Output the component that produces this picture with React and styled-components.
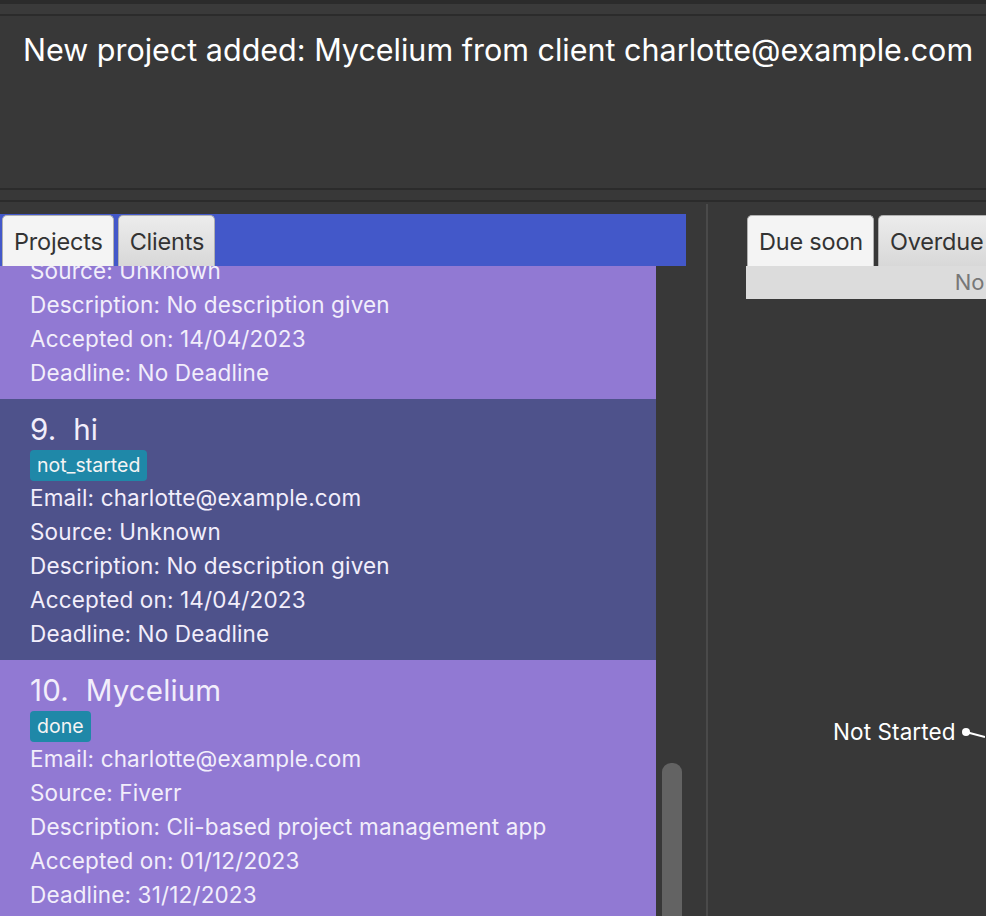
import React, { useLayoutEffect, useRef } from 'react';
import styled, { createGlobalStyle } from 'styled-components';

const GlobalStyle = createGlobalStyle`
  html, body {
    margin: 0;
    padding: 0;
    background: #383838;
    font-family: Inter, "Noto Sans", sans-serif;
  }
`;

const Window = styled.div`
  width: 986px;
  height: 916px;
  overflow: hidden;
  display: flex;
  flex-direction: column;
  background: #383838;
`;

const MenuStrip = styled.div`
  flex: none;
  height: 10px;
  border-top: 4px solid #2b2b2b;
  border-bottom: 2px solid #2b2b2b;
  background: #3a3a3a;
`;

const ResultBox = styled.div`
  flex: none;
  height: 174px;
  box-sizing: border-box;
  padding: 15px 23px;
  color: #ffffff;
  font-size: 30.5px;
  line-height: 38px;
  border-bottom: 2px solid #2b2b2b;
  white-space: nowrap;
`;

const Spacer = styled.div`
  flex: none;
  height: 10px;
  border-bottom: 2px solid #2b2b2b;
`;

const Main = styled.div`
  flex: 1;
  display: flex;
  min-height: 0;
`;

const LeftPanel = styled.div`
  flex: none;
  width: 686px;
  padding-top: 12px;
  display: flex;
  flex-direction: column;
  min-height: 0;
`;

const TabHeader = styled.div`
  flex: none;
  display: flex;
  gap: 4px;
  padding-left: ${({ $inset }) => $inset || 2}px;
  height: 52px;
  padding-top: 1px;
  box-sizing: border-box;
  background: ${({ $bg }) => $bg || 'transparent'};
`;

const Tab = styled.div`
  height: 51px;
  box-sizing: border-box;
  padding: 0 10px 0 11px;
  display: flex;
  align-items: center;
  font-size: 23.5px;
  letter-spacing: -0.2px;
  color: #333;
  border: 1px solid #b0b0b0;
  border-bottom: none;
  border-radius: 5px 5px 0 0;
  background: ${({ $active }) =>
    $active ? '#f4f4f4' : 'linear-gradient(#ececec, #d8d8d8)'};
`;

const ListArea = styled.div`
  flex: 1;
  display: flex;
  min-height: 0;
`;

const List = styled.div`
  width: 656px;
  overflow: hidden;
`;

const ScrollTrack = styled.div`
  width: 30px;
  position: relative;
`;

const ScrollThumb = styled.div`
  position: absolute;
  left: 6px;
  top: 497px;
  width: 20px;
  height: 200px;
  border-radius: 9px;
  background: #636363;
`;

const Card = styled.div`
  padding: 12px 30px 9px;
  background: ${({ $selected }) => ($selected ? '#4e528b' : '#9179d3')};
  color: #f2eefb;
  font-size: 22.5px;
  letter-spacing: 0.15px;
  line-height: 34px;
`;

const Title = styled.div`
  font-size: 29.5px;
  line-height: 36px;
  white-space: pre;
`;

const Badge = styled.span`
  display: inline-block;
  margin-top: 2px;
  padding: 0 7px;
  height: 31px;
  line-height: 31px;
  font-size: 19.5px;
  letter-spacing: 0;
  border-radius: 4px;
  background: #1f88a8;
  color: #f4f4f4;
`;

const Divider = styled.div`
  flex: none;
  width: 60px;
  display: flex;
  padding-top: 2px;
  box-sizing: border-box;

  &::before {
    content: "";
    width: 2px;
    margin-left: 20px;
    background: #4a4a4a;
  }
`;

const RightPanel = styled.div`
  flex: none;
  width: 640px;
  padding-top: 12px;
  display: flex;
  flex-direction: column;
`;

const EmptyNote = styled.div`
  height: 33px;
  background: #dcdcdc;
  color: #777;
  font-size: 22px;
  line-height: 33px;
  text-align: center;
`;

const ChartArea = styled.div`
  padding: 418px 0 0 87px;
  display: flex;
  align-items: center;
  gap: 5px;
`;

const PieLabel = styled.span`
  font-size: 22.5px;
  letter-spacing: 0.1px;
  color: #ffffff;
  line-height: 30px;
`;

const projects = [
  {
    no: 8, name: 'hello', status: 'not_started', email: 'charlotte@example.com',
    source: 'Unknown', desc: 'No description given', accepted: '14/04/2023', deadline: 'No Deadline',
  },
  {
    no: 9, name: 'hi', status: 'not_started', email: 'charlotte@example.com',
    source: 'Unknown', desc: 'No description given', accepted: '14/04/2023', deadline: 'No Deadline',
    selected: true,
  },
  {
    no: 10, name: 'Mycelium', status: 'done', email: 'charlotte@example.com',
    source: 'Fiverr', desc: 'Cli-based project management app', accepted: '01/12/2023', deadline: '31/12/2023',
  },
];

const ProjectCard = ({ p }) => (
  <Card $selected={p.selected}>
    <Title>{`${p.no}.  ${p.name}`}</Title>
    <Badge>{p.status}</Badge>
    <div>Email: {p.email}</div>
    <div>Source: {p.source}</div>
    <div>Description: {p.desc}</div>
    <div>Accepted on: {p.accepted}</div>
    <div>Deadline: {p.deadline}</div>
  </Card>
);

export default function App() {
  const listRef = useRef(null);

  useLayoutEffect(() => {
    if (listRef.current) listRef.current.scrollTop = 128;
  }, []);

  return (
    <>
      <GlobalStyle />
      <Window>
        <MenuStrip />
        <ResultBox>New project added: Mycelium from client charlotte@example.com</ResultBox>
        <Spacer />
        <Main>
          <LeftPanel>
            <TabHeader $bg="#4358c9">
              <Tab $active>Projects</Tab>
              <Tab>Clients</Tab>
            </TabHeader>
            <ListArea>
              <List ref={listRef}>
                {projects.map((p) => (
                  <ProjectCard key={p.no} p={p} />
                ))}
              </List>
              <ScrollTrack>
                <ScrollThumb />
              </ScrollTrack>
            </ListArea>
          </LeftPanel>
          <Divider />
          <RightPanel>
            <TabHeader $inset={1}>
              <Tab $active>Due soon</Tab>
              <Tab>Overdue</Tab>
            </TabHeader>
            <EmptyNote>No projects due soon</EmptyNote>
            <ChartArea>
              <PieLabel>Not Started</PieLabel>
              <svg width="24" height="20" viewBox="0 0 24 20">
                <circle cx="5" cy="10" r="4" fill="#fff" />
                <line x1="5" y1="10" x2="24" y2="15" stroke="#fff" strokeWidth="2" />
              </svg>
            </ChartArea>
          </RightPanel>
        </Main>
      </Window>
    </>
  );
}
